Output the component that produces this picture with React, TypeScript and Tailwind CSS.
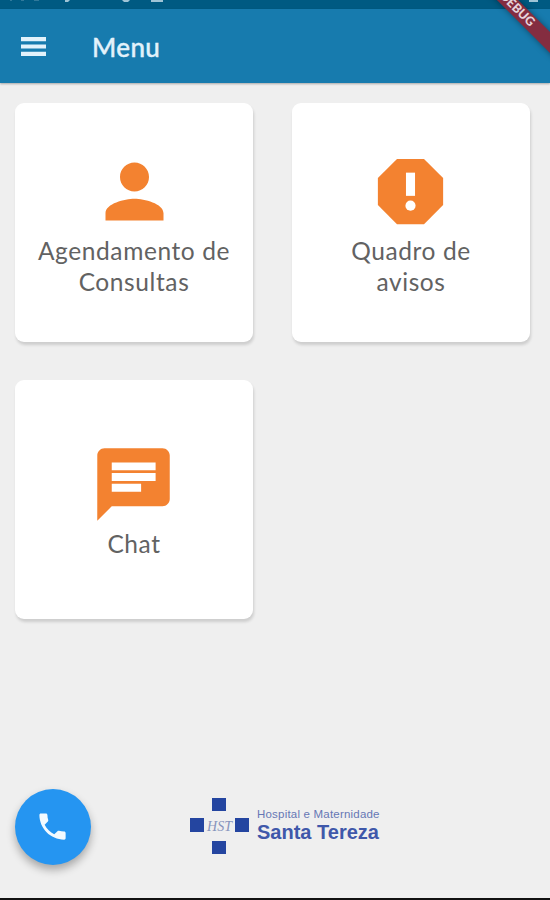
import type { ReactNode } from "react";
import { MdPerson, MdPhone } from "react-icons/md";

type MenuCardProps = {
  icon: ReactNode;
  children: ReactNode;
};

function ReportIcon() {
  return (
    <svg width="87" height="87" viewBox="0 0 24 24" fill="currentColor" className="-translate-x-px">
      <path d="M15.73 3H8.27L3 8.27v7.46L8.27 21h7.46L21 15.73V8.27z" />
      <rect x="10.75" y="6.8" width="2.5" height="6.4" fill="#fff" />
      <circle cx="12" cy="15.9" r="1.4" fill="#fff" />
    </svg>
  );
}

function ChatIcon() {
  return (
    <svg width="87" height="87" viewBox="0 0 24 24" fill="currentColor" className="-translate-x-px">
      <path d="M20 2H4c-1.1 0-1.99.9-1.99 2L2 22l4-4h14c1.1 0 2-.9 2-2V4c0-1.1-.9-2-2-2z" />
      <path d="M6 5.9h12.1v2.2H6zM6 8.85h12.1v2.2H6zM6 11.8h8.1V14H6z" fill="#fff" />
    </svg>
  );
}

function MenuCard({ icon, children }: MenuCardProps) {
  return (
    <button
      type="button"
      className="flex h-[239px] flex-col items-center justify-center rounded-[9px] bg-white text-[#f38230] shadow-[1px_3px_3px_rgba(0,0,0,0.14)]"
    >
      {icon}
      <span className="block text-center text-[24.5px] leading-[31px] tracking-[0.6px] text-[#626262]">
        {children}
      </span>
    </button>
  );
}

function StatusBar() {
  return (
    <div className="h-[9px] shrink-0 bg-[#005a82]">
      <svg width="550" height="9" className="block" fill="#9fc4d6">
        <path d="M10 0h2v1h-2zM21 0h3v1h-3zM34 0h5v1h-5z" opacity="0.3" />
        <path d="M65 0h5l-2 2h-3zM122 0h8l-2 2h-4zM151 0h12v2h-12zM529 0h9v2h-9z" />
      </svg>
    </div>
  );
}

function DebugBanner() {
  return (
    <div className="pointer-events-none absolute top-0 right-0 h-[84px] w-[100px] overflow-hidden">
      <div className="absolute top-[3px] left-[8px] flex h-[15px] w-[120px] rotate-45 items-center justify-center bg-[#842d40] pr-[3px] text-[12.5px] leading-none font-black text-[#e6d3da] shadow-[0_0_6px_rgba(0,0,0,0.4)]">
        <span className="block">DEBUG</span>
      </div>
    </div>
  );
}

function HospitalLogo() {
  return (
    <div className="flex items-center gap-[7px] pb-[3px] font-['Liberation_Sans']">
      <svg width="60" height="58" viewBox="0 0 60 58">
        <g fill="#2445a0">
          <rect x="22" y="1" width="14" height="13" />
          <rect x="0" y="21" width="14" height="14" />
          <rect x="45" y="21" width="14" height="14" />
          <rect x="22" y="44" width="14" height="13" />
        </g>
        <text
          x="29.5"
          y="34"
          textAnchor="middle"
          fontFamily="Liberation Serif, serif"
          fontStyle="italic"
          fontSize="14"
          fill="#8795bd"
        >
          HST
        </text>
      </svg>
      <div className="pb-0.5 text-[#3f58aa]">
        <p className="text-[11.5px] leading-[14px] tracking-[0.2px] whitespace-nowrap text-[#6677b5]">
          Hospital e Maternidade
        </p>
        <p className="text-[20px] leading-[22px] font-bold whitespace-nowrap">Santa Tereza</p>
      </div>
    </div>
  );
}

export default function App() {
  return (
    <div className="relative flex h-[900px] w-[550px] flex-col overflow-hidden border-b-2 border-[#111] bg-[#efefef] font-['Lato','Noto_Sans',sans-serif]">
      <StatusBar />
      <header className="flex h-[74px] shrink-0 items-center gap-[46px] bg-[#177bae] pl-[21px] text-[#e2f2fb] shadow-[0_1px_2px_rgba(0,0,0,0.3)]">
        <button type="button" aria-label="Abrir menu">
          <svg width="25" height="19" fill="currentColor" className="block">
            <path d="M0 0h25v4.2H0zM0 7.4h25v4.2H0zM0 14.8h25V19H0z" />
          </svg>
        </button>
        <h1 className="pt-[2px] text-[26px] leading-none font-medium tracking-[0.4px] [-webkit-text-stroke:0.4px]">
          Menu
        </h1>
      </header>

      <main className="grid grid-cols-[238px_238px] gap-x-[39px] gap-y-[38px] pt-5 pl-[15px]">
        <MenuCard icon={<MdPerson size={87} />}>
          Agendamento de
          <br />
          Consultas
        </MenuCard>
        <MenuCard icon={<ReportIcon />}>
          Quadro de
          <br />
          avisos
        </MenuCard>
        <MenuCard icon={<ChatIcon />}>Chat</MenuCard>
      </main>

      <footer className="mt-auto flex items-center gap-[99px] pb-[33px] pl-[15px]">
        <button
          type="button"
          aria-label="Ligar"
          className="flex size-[76px] items-center justify-center rounded-full bg-[#2595f1] pr-0.5 pb-0.5 text-[#f3faff] shadow-[0_5px_8px_rgba(0,0,0,0.3)]"
        >
          <MdPhone size={35} />
        </button>
        <HospitalLogo />
      </footer>

      <DebugBanner />
    </div>
  );
}
